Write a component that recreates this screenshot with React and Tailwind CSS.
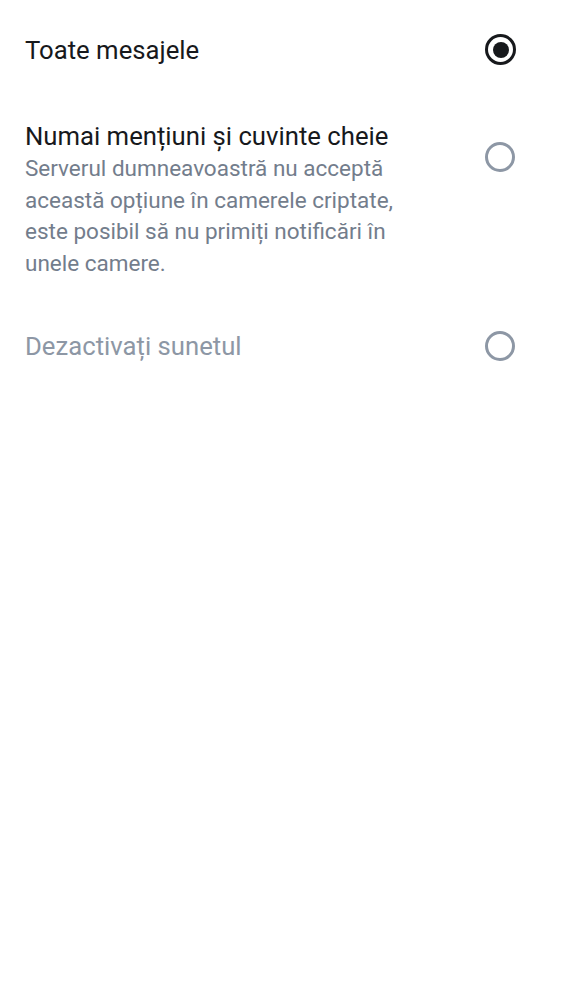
export default function App() {
  const font = { fontFamily: "Roboto, 'Noto Sans', sans-serif" };

  return (
    <div className="min-h-[1000px] bg-white pl-[25px] pr-[46px]" style={font}>
      <div className="flex items-center justify-between pt-[34px]">
        <span className="text-[25.7px] leading-[30px] text-[#17191c]">Toate mesajele</span>
        <span className="flex h-[31px] w-[31px] items-center justify-center rounded-full border-[3px] border-[#17191c]">
          <span className="h-[16px] w-[16px] rounded-full bg-[#17191c]" />
        </span>
      </div>

      <div className="mt-[56px] flex items-start justify-between">
        <div className="max-w-[400px]">
          <p className="text-[25.7px] leading-[30px] text-[#17191c]">Numai mențiuni și cuvinte cheie</p>
          <p className="mt-[2px] text-[22.5px] leading-[31.5px] text-[#737d8c]">
            Serverul dumneavoastră nu acceptă această opțiune în camerele criptate, este posibil să nu primiți notificări în unele camere.
          </p>
        </div>
        <span className="mr-[1px] mt-[21px] h-[30px] w-[30px] shrink-0 rounded-full border-[3px] border-[#8d97a5]" />
      </div>

      <div className="mt-[52px] flex items-center justify-between">
        <span className="text-[25.7px] leading-[30px] text-[#8d97a5]">Dezactivați sunetul</span>
        <span className="mr-[1px] h-[30px] w-[30px] rounded-full border-[3px] border-[#8d97a5]" />
      </div>
    </div>
  );
}
